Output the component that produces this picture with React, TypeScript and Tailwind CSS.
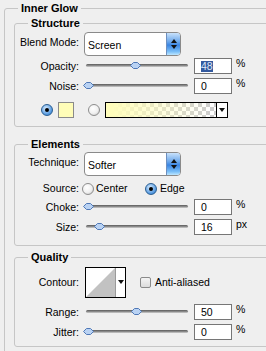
import React from 'react';

function Thumb() {
  return (
    <svg width="11" height="7" viewBox="0 0 11 7">
      <path d="M0.5 3.5 L3.5 0.5 H7.5 L10.5 3.5 L7.5 6.5 H3.5 Z" fill="#b9d2f3" stroke="#4f78b6" />
    </svg>
  );
}

function Slider({ pos }: { pos: number }) {
  return (
    <div className="relative w-[102px] h-[8px] ml-[7px] shrink-0">
      <div className="absolute left-0 right-0 top-[2px] h-[3px] rounded-full bg-[linear-gradient(to_bottom,#5a5a5a,#8e8e8e_55%,#d2d2d2)]" />
      <div className="absolute top-0" style={{ left: pos - 5 }}>
        <Thumb />
      </div>
    </div>
  );
}

function NumField({ value, unit, selected }: { value: string; unit: string; selected?: boolean }) {
  return (
    <div className="flex items-start ml-[6px]">
      <div className="w-[38px] h-[16px] border border-[#767676] bg-white pl-[6px] flex items-center">
        {selected ? <span className="bg-[#33599e] text-[#dfe7f6] leading-[11px]">{value}</span> : value}
      </div>
      <span className="ml-[4px] leading-[11px]">{unit}</span>
    </div>
  );
}

function Label({ children }: { children: React.ReactNode }) {
  return <div className="w-[64px] shrink-0 text-right">{children}</div>;
}

function SliderRow({ label, pos, value, unit, selected }: { label: string; pos: number; value: string; unit: string; selected?: boolean }) {
  return (
    <div className="flex items-center h-[16px]">
      <Label>{label}</Label>
      <Slider pos={pos} />
      <NumField value={value} unit={unit} selected={selected} />
    </div>
  );
}

function Select({ value }: { value: string }) {
  return (
    <div className="ml-[5px] w-[97px] h-[24px] flex border border-[#8a8a8a] rounded-[4px] bg-white overflow-hidden">
      <div className="flex-1 pl-[3px] pt-[6px]">{value}</div>
      <div className="w-[14px] h-full border-l border-[#6d8fbf] bg-[linear-gradient(to_bottom,#c9e2fb,#6aa6ea_40%,#3a84e2_55%,#7cc0f8_85%,#bde6ff)] flex flex-col items-center justify-center gap-[2px]">
        <svg width="6" height="4" viewBox="0 0 6 4"><path d="M3 0 L6 4 H0 Z" fill="#111" /></svg>
        <svg width="6" height="4" viewBox="0 0 6 4"><path d="M0 0 H6 L3 4 Z" fill="#111" /></svg>
      </div>
    </div>
  );
}

function Radio({ on }: { on?: boolean }) {
  return on ? (
    <div className="w-[12px] h-[12px] rounded-full border border-[#2b5f93] bg-[radial-gradient(circle_at_40%_35%,#d8ecff,#4f95de_70%,#2f6fb5)] flex items-center justify-center shrink-0">
      <div className="w-[4px] h-[4px] rounded-full bg-black" />
    </div>
  ) : (
    <div className="w-[12px] h-[12px] rounded-full border border-[#8d8d8d] bg-[radial-gradient(circle_at_40%_35%,#ffffff,#f0f0f0_55%,#bdbdbd)] shrink-0" />
  );
}

function Legend({ children }: { children: React.ReactNode }) {
  return <legend className="ml-[13px] px-[3px] font-bold text-[11px] leading-[14px]">{children}</legend>;
}

export default function App() {
  return (
    <div className="w-[266px] h-[351px] overflow-hidden bg-[#efefef] pl-[4px] pt-[1px] text-[10.5px] leading-[13px] text-black font-['Liberation_Sans',Arial,sans-serif]">
      <fieldset className="w-[300px] border border-[#c6c6c6] rounded-[3px] pb-[20px]">
        <Legend>Inner Glow</Legend>
        <div className="pl-[9px] pt-[1px] flex flex-col">
          <fieldset className="w-[280px] border border-[#c6c6c6] rounded-[3px] pb-[8px]">
            <Legend>Structure</Legend>
            <div className="flex items-center mt-[2px]">
              <div className="w-[64px] shrink-0 text-right mb-[4px]">Blend Mode:</div>
              <Select value="Screen" />
            </div>
            <div className="mt-[2px]">
              <SliderRow label="Opacity:" pos={49} value="48" unit="%" selected />
            </div>
            <div className="mt-[4px]">
              <SliderRow label="Noise:" pos={2} value="0" unit="%" />
            </div>
            <div className="flex items-center mt-[8px] h-[16px]">
              <div className="ml-[26px]"><Radio on /></div>
              <div className="ml-[5px] w-[16px] h-[16px] border border-[#8a8a8a] bg-[#fffdb8]" />
              <div className="ml-[14px]"><Radio /></div>
              <div className="ml-[5px] w-[123px] h-[16px] border border-black flex">
                <div className="flex-1 bg-[linear-gradient(to_right,#fffdbb_5%,rgba(255,253,187,0)_95%),repeating-conic-gradient(#cdcdcd_0_25%,#ffffff_0_50%)] bg-[length:100%_100%,8px_8px]" />
                <div className="w-[11px] border-l border-black bg-white flex items-center justify-center">
                  <svg width="6" height="4" viewBox="0 0 6 4"><path d="M0 0 H6 L3 4 Z" fill="#111" /></svg>
                </div>
              </div>
            </div>
          </fieldset>

          <fieldset className="mt-[10px] w-[280px] border border-[#c6c6c6] rounded-[3px] pb-[10px]">
            <Legend>Elements</Legend>
            <div className="flex items-center mt-[1px]">
              <div className="w-[64px] shrink-0 text-right mb-[4px]">Technique:</div>
              <Select value="Softer" />
            </div>
            <div className="flex items-center mt-[6px] h-[13px]">
              <Label>Source:</Label>
              <div className="ml-[3px] w-[63px] flex items-center gap-[2px]">
                <Radio />
                <span>Center</span>
              </div>
              <div className="flex items-center gap-[3px]">
                <Radio on />
                <span>Edge</span>
              </div>
            </div>
            <div className="mt-[4px]">
              <SliderRow label="Choke:" pos={2} value="0" unit="%" />
            </div>
            <div className="mt-[4px]">
              <SliderRow label="Size:" pos={13} value="16" unit="px" />
            </div>
          </fieldset>

          <fieldset className="mt-[4px] w-[280px] border border-[#c6c6c6] rounded-[3px] pb-[6px]">
            <Legend>Quality</Legend>
            <div className="flex items-center mt-[3px]">
              <Label>Contour:</Label>
              <div className="ml-[6px] w-[41px] h-[31px] border border-black flex bg-white">
                <svg width="29" height="29" viewBox="0 0 29 29" className="shrink-0">
                  <path d="M0 29 L29 0 V29 Z" fill="#c2c2c2" />
                </svg>
                <div className="flex-1 border-l border-[#9a9a9a] flex justify-center pt-[12px]">
                  <svg width="6" height="4" viewBox="0 0 6 4"><path d="M0 0 H6 L3 4 Z" fill="#111" /></svg>
                </div>
              </div>
              <div className="ml-[14px] w-[11px] h-[11px] rounded-[2px] border border-[#8a8a8a] bg-[linear-gradient(to_bottom,#f4f4f4,#dcdcdc)]" />
              <span className="ml-[4px]">Anti-aliased</span>
            </div>
            <div className="mt-[6px]">
              <SliderRow label="Range:" pos={50} value="50" unit="%" />
            </div>
            <div className="mt-[4px]">
              <SliderRow label="Jitter:" pos={2} value="0" unit="%" />
            </div>
          </fieldset>
        </div>
      </fieldset>
    </div>
  );
}
